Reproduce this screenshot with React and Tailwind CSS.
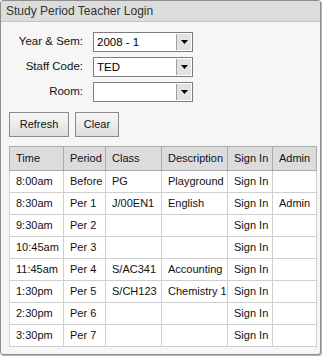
import React from "react";

const rows = [
  ["8:00am", "Before", "PG", "Playground", "Sign In", ""],
  ["8:30am", "Per 1", "J/00EN1", "English", "Sign In", "Admin"],
  ["9:30am", "Per 2", "", "", "Sign In", ""],
  ["10:45am", "Per 3", "", "", "Sign In", ""],
  ["11:45am", "Per 4", "S/AC341", "Accounting", "Sign In", ""],
  ["1:30pm", "Per 5", "S/CH123", "Chemistry 1", "Sign In", ""],
  ["2:30pm", "Per 6", "", "", "Sign In", ""],
  ["3:30pm", "Per 7", "", "", "Sign In", ""],
];

const widths = ["w-[54px]", "w-[42px]", "w-[56px]", "w-[66px]", "w-[45px]", "w-[44px]"];
const heads = ["Time", "Period", "Class", "Description", "Sign In", "Admin"];

function Select({ value }) {
  return (
    <div className="flex h-[20px] w-[100px] border border-[#7c7c7c] bg-white">
      <div className="flex-1 pl-[3px] text-[11.5px] leading-[18px] text-black">{value}</div>
      <div className="m-[1px] flex w-[15px] items-center justify-center border-l border-[#a0a0a0] bg-[#e2e2e2]">
        <svg width="7" height="4" viewBox="0 0 7 4">
          <polygon points="0,0 7,0 3.5,4" fill="#000" />
        </svg>
      </div>
    </div>
  );
}

function FormRow({ label, value }) {
  return (
    <div className="flex items-center">
      <div className="w-[83px] pr-[1px] text-right text-[11.5px] text-[#111]">{label}</div>
      <div className="ml-[9px]">
        <Select value={value} />
      </div>
    </div>
  );
}

function Btn({ children, w }) {
  return (
    <button
      className={`${w} h-[25px] border border-[#8a8a8a] bg-gradient-to-b from-[#f7f7f7] to-[#dedede] text-[11px] text-[#111]`}
    >
      {children}
    </button>
  );
}

export default function App() {
  return (
    <div
      className="h-[358px] w-[323px] bg-white"
      style={{ fontFamily: '"Liberation Sans", Arial, sans-serif' }}
    >
      <div className="h-[355px] w-[321px] overflow-hidden rounded-[3px] border border-[#8e8e8e] bg-[#f6f6f6] shadow-[1px_1px_0_#b4b4b4]">
        <div className="h-[21px] border-b border-[#c6c6c6] bg-[#dcdcdc] pl-[5px] text-[12px] leading-[20px] text-[#333]">
          Study Period Teacher Login
        </div>
        <div className="flex flex-col gap-[5px] pt-[10px]">
          <FormRow label="Year & Sem:" value="2008 - 1" />
          <FormRow label="Staff Code:" value="TED" />
          <FormRow label="Room:" value="" />
        </div>
        <div className="mt-[10px] flex gap-[6px] pl-[8px]">
          <Btn w="w-[60px]">Refresh</Btn>
          <Btn w="w-[44px]">Clear</Btn>
        </div>
        <div className="mt-[9px] pl-[8px]">
          <table className="w-[307px] table-fixed border-collapse border border-[#9a9a9a] text-[11px] text-[#111]">
            <colgroup>
              {widths.map((w, i) => (
                <col key={i} className={w} />
              ))}
            </colgroup>
            <thead>
              <tr className="h-[24px] bg-[#dcdcdc]">
                {heads.map((h) => (
                  <th
                    key={h}
                    className="whitespace-nowrap border border-[#ababab] pl-[6px] pr-0 text-left font-normal"
                  >
                    {h}
                  </th>
                ))}
              </tr>
            </thead>
            <tbody className="bg-white">
              {rows.map((r, ri) => (
                <tr key={ri} className="h-[22px]">
                  {r.map((c, ci) => (
                    <td
                      key={ci}
                      className="whitespace-nowrap border border-[#cfcfcf] py-0 pl-[6px] pr-0 text-left"
                    >
                      {c}
                    </td>
                  ))}
                </tr>
              ))}
            </tbody>
          </table>
        </div>
      </div>
    </div>
  );
}
